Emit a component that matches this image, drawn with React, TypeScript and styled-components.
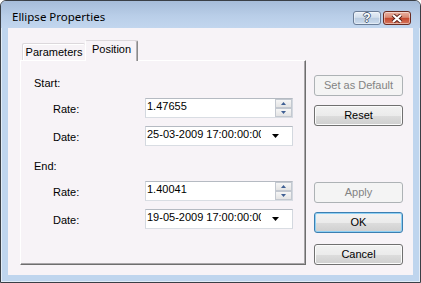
import React from "react";
import styled, { createGlobalStyle, css } from "styled-components";

const GlobalStyle = createGlobalStyle`
  html, body {
    margin: 0;
    padding: 0;
    background: #ffffff;
  }
  body {
    font-family: "Liberation Sans", Arial, sans-serif;
    font-size: 11px;
    color: #000000;
  }
`;

const Window = styled.div`
  width: 421px;
  height: 283px;
  box-sizing: border-box;
  border: 1px solid #3a3f46;
  border-radius: 6px 6px 0 0;
  background: #bfd5ee;
  box-shadow: inset 0 0 0 1px rgba(255, 255, 255, 0.55);
  display: flex;
  flex-direction: column;
  overflow: hidden;
`;

const TitleBar = styled.div`
  height: 27px;
  flex: none;
  display: flex;
  justify-content: space-between;
  align-items: flex-start;
  padding: 0 9px 0 11px;
  background: linear-gradient(#a6bcd9, #b9cee8 55%, #c2d6ee);
`;

const Title = styled.div`
  font-family: "Noto Sans", "Liberation Sans", sans-serif;
  font-size: 11.5px;
  line-height: 16px;
  padding-top: 8px;
`;

const CaptionButtons = styled.div`
  display: flex;
  gap: 2px;
  padding-top: 10px;
`;

const CaptionButton = styled.div<{ $close?: boolean }>`
  width: 28px;
  height: 14px;
  box-sizing: border-box;
  border-radius: 3px;
  display: flex;
  align-items: center;
  justify-content: center;
  ${(p) =>
    p.$close
      ? css`
          border: 1px solid #6b2c21;
          background: linear-gradient(#eab2a2, #d98a74 45%, #c4462c 50%, #d5775e);
        `
      : css`
          border: 1px solid #6a7c96;
          background: linear-gradient(#e7eef7, #d3dfec 45%, #b9cbe0 50%, #cddcee);
        `}
  box-shadow: inset 0 0 0 1px rgba(255, 255, 255, 0.45);
`;

const HelpGlyph = styled.span`
  font-family: "Liberation Sans", Arial, sans-serif;
  font-weight: bold;
  font-size: 12px;
  line-height: 12px;
  color: #ffffff;
  text-shadow: -1px 0 #4e5f78, 1px 0 #4e5f78, 0 -1px #4e5f78, 0 1px #4e5f78;
`;

const Frame = styled.div`
  flex: 1;
  display: flex;
  padding: 0 7px 7px;
`;

const Client = styled.div`
  flex: 1;
  display: flex;
  gap: 8px;
  padding: 12px 10px 10px 12px;
  background: #f7f3f7;
`;

const TabArea = styled.div`
  width: 286px;
  display: flex;
  flex-direction: column;
`;

const TabStrip = styled.div`
  height: 20px;
  display: flex;
  align-items: flex-end;
  padding-left: 2px;
`;

const Tab = styled.div<{ $active?: boolean; $w: number }>`
  width: ${(p) => p.$w}px;
  box-sizing: border-box;
  display: flex;
  justify-content: center;
  padding-top: 2px;
  line-height: 13px;
  border: 1px solid;
  border-bottom: none;
  border-color: #dcd8dc #8a8a8a transparent #dcd8dc;
  border-radius: 2px 2px 0 0;
  box-shadow: inset 1px 1px 0 #ffffff;
  background: #f7f3f7;
  ${(p) =>
    p.$active
      ? css`
          height: 21px;
          margin-bottom: -1px;
          position: relative;
          z-index: 1;
          border-left-color: #ffffff;
          box-shadow: inset -1px 0 0 #b4b0b4;
        `
      : css`
          height: 17px;
          border-right: none;
        `}
`;

const TabPanel = styled.div`
  flex: 1;
  border: 1px solid;
  border-color: #ffffff #6e6e6e #6e6e6e #ffffff;
  box-shadow: inset -1px -1px 0 #a9a6a9;
  display: flex;
  flex-direction: column;
`;

const GroupLabel = styled.div<{ $top: number }>`
  line-height: 13px;
  margin-top: ${(p) => p.$top}px;
  padding-left: 13px;
`;

const FieldRow = styled.div`
  display: flex;
  align-items: flex-start;
  margin-top: 8px;
  padding-left: 32px;
`;

const FieldLabel = styled.div`
  width: 92px;
  line-height: 13px;
  padding-top: 5px;
`;

const Field = styled.div`
  width: 148px;
  height: 20px;
  box-sizing: border-box;
  border: 1px solid;
  border-color: #b5bac2 #d3d8df #d9dde3 #d3d8df;
  background: #ffffff;
  display: flex;
`;

// the date text is clipped by the field, as in the original dialog
const FieldText = styled.div<{ $w?: number }>`
  ${(p) => (p.$w ? `width: ${p.$w}px;` : "flex: 1;")}
  flex: none;
  padding: 1px 0 0 1px;
  line-height: 13px;
  white-space: nowrap;
  overflow: hidden;
`;

const Spin = styled.div`
  margin-left: auto;
  width: 17px;
  display: flex;
  flex-direction: column;
`;

const SpinHalf = styled.div`
  flex: 1;
  box-sizing: border-box;
  border: 1px solid #c3c8d0;
  background: linear-gradient(#f6f6f6, #e4e4e4);
  display: flex;
  align-items: center;
  justify-content: center;
`;

const ComboArrow = styled.div`
  flex: 1;
  display: flex;
  align-items: center;
  padding-left: 11px;
`;

const ButtonColumn = styled.div`
  width: 89px;
  display: flex;
  flex-direction: column;
  padding-top: 35px;
`;

const Button = styled.div<{ $default?: boolean; $disabled?: boolean; $top?: number }>`
  height: 21px;
  box-sizing: border-box;
  margin-top: ${(p) => p.$top ?? 0}px;
  border: 1px solid #707070;
  border-radius: 3px;
  display: flex;
  align-items: center;
  justify-content: center;
  line-height: 13px;
  background: linear-gradient(#f2f2f2, #ebebeb 50%, #dddddd 50%, #cfcfcf);
  box-shadow: inset 0 0 0 1px #fbfbfb;
  ${(p) =>
    p.$disabled &&
    css`
      border-color: #adb2b5;
      background: #f4f4f4;
      color: #838383;
      box-shadow: none;
    `}
  ${(p) =>
    p.$default &&
    css`
      border-color: #3c7fb1;
      box-shadow: inset 0 0 0 1px #8fd0f4;
    `}
`;

const Spacer = styled.div`
  flex: 1;
`;

const SpinBox = ({ value }: { value: string }) => (
  <Field>
    <FieldText>{value}</FieldText>
    <Spin>
      <SpinHalf>
        <svg width="5" height="3" viewBox="0 0 5 3">
          <path d="M2.5 0 L5 3 L0 3 Z" fill="#3f5f93" />
        </svg>
      </SpinHalf>
      <SpinHalf>
        <svg width="5" height="3" viewBox="0 0 5 3">
          <path d="M0 0 L5 0 L2.5 3 Z" fill="#3f5f93" />
        </svg>
      </SpinHalf>
    </Spin>
  </Field>
);

const DateCombo = ({ value }: { value: string }) => (
  <Field>
    <FieldText $w={114}>{value}</FieldText>
    <ComboArrow>
      <svg width="7" height="4" viewBox="0 0 7 4">
        <path d="M0 0 L7 0 L3.5 4 Z" fill="#000000" />
      </svg>
    </ComboArrow>
  </Field>
);

const sections = [
  { title: "Start:", rate: "1.47655", date: "25-03-2009 17:00:00:00", top: 16 },
  { title: "End:", rate: "1.40041", date: "19-05-2009 17:00:00:00", top: 14 },
];

export default function App() {
  return (
    <>
      <GlobalStyle />
      <Window>
        <TitleBar>
          <Title>Ellipse Properties</Title>
          <CaptionButtons>
            <CaptionButton>
              <HelpGlyph>?</HelpGlyph>
            </CaptionButton>
            <CaptionButton $close>
              <svg width="12" height="9" viewBox="0 0 12 9">
                <path d="M2 1 L10 8 M10 1 L2 8" stroke="#5a2018" strokeWidth="4" />
                <path d="M2 1 L10 8 M10 1 L2 8" stroke="#ffffff" strokeWidth="2.2" />
              </svg>
            </CaptionButton>
          </CaptionButtons>
        </TitleBar>
        <Frame>
          <Client>
            <TabArea>
              <TabStrip>
                <Tab $w={63}>Parameters</Tab>
                <Tab $w={53} $active>
                  Position
                </Tab>
              </TabStrip>
              <TabPanel>
                {sections.map((s) => (
                  <React.Fragment key={s.title}>
                    <GroupLabel $top={s.top}>{s.title}</GroupLabel>
                    <FieldRow>
                      <FieldLabel>Rate:</FieldLabel>
                      <SpinBox value={s.rate} />
                    </FieldRow>
                    <FieldRow>
                      <FieldLabel>Date:</FieldLabel>
                      <DateCombo value={s.date} />
                    </FieldRow>
                  </React.Fragment>
                ))}
              </TabPanel>
            </TabArea>
            <ButtonColumn>
              <Button $disabled>Set as Default</Button>
              <Button $top={9}>Reset</Button>
              <Spacer />
              <Button $disabled>Apply</Button>
              <Button $default $top={9}>
                OK
              </Button>
              <Button $top={11}>Cancel</Button>
            </ButtonColumn>
          </Client>
        </Frame>
      </Window>
    </>
  );
}
